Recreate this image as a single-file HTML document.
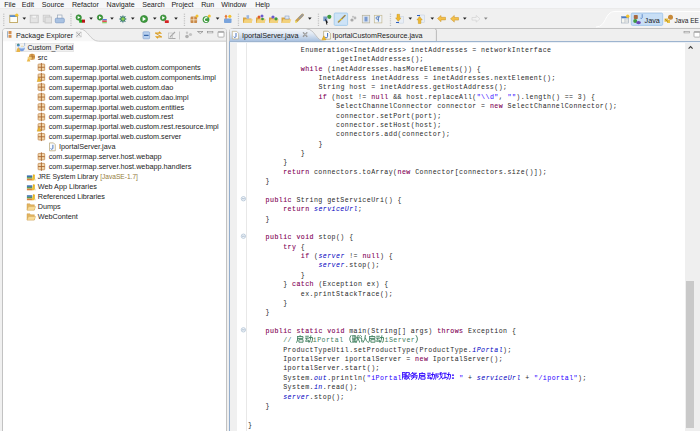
<!DOCTYPE html>
<html><head><meta charset="utf-8"><style>
*{margin:0;padding:0;box-sizing:border-box}
html,body{width:700px;height:431px;overflow:hidden;background:#f0f0f0;font-family:"Liberation Sans",sans-serif}
.a{position:absolute}
.mi{position:absolute;top:0.6px;font-size:7.1px;line-height:9px;color:#202020}
.cl{position:absolute;white-space:pre;font-family:"Liberation Mono",monospace;font-size:6.6px;letter-spacing:0.44px;line-height:9.365px;height:9.365px;color:#2a2a2a}
.k{color:#7f0055;-webkit-text-stroke:0.1px #7f0055}
.s{color:#2a00ff}
.f{color:#0000c0;font-style:italic}
.c{color:#3f7f5f}
.cjw{display:inline-block;width:8.2px;height:0;position:relative}svg.cj{position:absolute;left:0;top:-7.3px;width:8.2px;height:7.8px}
.tt{position:absolute;font-size:7.25px;line-height:10px;margin-top:0.65px;white-space:nowrap;color:#1c1c1c}
.dec{color:#957c3c}
svg.ov{position:absolute;left:0;top:0;width:700px;height:431px}
</style></head><body>
<div class="a" style="left:0;top:0;width:700px;height:9.2px;background:#f6f7f9;border-bottom:1px solid #ebebeb"><div class="mi" style="left:4.2px">File</div><div class="mi" style="left:21.8px">Edit</div><div class="mi" style="left:41.8px">Source</div><div class="mi" style="left:72.0px">Refactor</div><div class="mi" style="left:106.6px">Navigate</div><div class="mi" style="left:142.2px">Search</div><div class="mi" style="left:171.4px">Project</div><div class="mi" style="left:201.2px">Run</div><div class="mi" style="left:221.2px">Window</div><div class="mi" style="left:255.2px">Help</div></div>
<!-- left panel -->
<div class="a" style="left:2px;top:28px;width:225px;height:410px;background:#fff;border:1px solid #c2c2c2;border-radius:3.5px 3.5px 0 0"></div>
<svg class="ov" viewBox="0 0 700 431"><path d="M3 41 V31.5 Q3 29 5.5 29 H225 Q226 29 226 31 V41 Z" fill="#efefef"/><path d="M3 41.5 V31.5 Q3 29 5.5 29 H80 C88 29 90 41.2 98.6 41.2 H3 Z" fill="#f7f7f7"/><path d="M80 29 C88 29 90 41.2 98.6 41.2 H226" stroke="#c6c6c6" stroke-width="0.9" fill="none"/></svg>
<div class="a" style="left:15px;top:42.6px;width:58.5px;height:9.4px;background:#f1f1f1;border:0.8px solid #e6e6e6"></div>
<div class="tt" style="left:16px;top:30px">Package Explorer</div>
<div class="ti ic-proj" style="left:16.0px;top:43.30px"></div><div class="tt" style="left:27.5px;top:42.30px"><span style="font-size:6.95px">Custom_Portal</span></div><div class="ti ic-src" style="left:26.5px;top:53.23px"></div><div class="tt" style="left:37.7px;top:52.23px">src</div><div class="ti ic-pkg" style="left:37.5px;top:63.16px"></div><div class="tt" style="left:48.7px;top:62.16px">com.supermap.iportal.web.custom.components</div><div class="ti ic-pkg2" style="left:37.5px;top:73.09px"></div><div class="tt" style="left:48.7px;top:72.09px">com.supermap.iportal.web.custom.components.impl</div><div class="ti ic-pkg" style="left:37.5px;top:83.02px"></div><div class="tt" style="left:48.7px;top:82.02px">com.supermap.iportal.web.custom.dao</div><div class="ti ic-pkg" style="left:37.5px;top:92.95px"></div><div class="tt" style="left:48.7px;top:91.95px">com.supermap.iportal.web.custom.dao.impl</div><div class="ti ic-pkg" style="left:37.5px;top:102.88px"></div><div class="tt" style="left:48.7px;top:101.88px">com.supermap.iportal.web.custom.entities</div><div class="ti ic-pkg" style="left:37.5px;top:112.81px"></div><div class="tt" style="left:48.7px;top:111.81px">com.supermap.iportal.web.custom.rest</div><div class="ti ic-pkg2" style="left:37.5px;top:122.74px"></div><div class="tt" style="left:48.7px;top:121.74px">com.supermap.iportal.web.custom.rest.resource.impl</div><div class="ti ic-pkg" style="left:37.5px;top:132.67px"></div><div class="tt" style="left:48.7px;top:131.67px">com.supermap.iportal.web.custom.server</div><div class="ti ic-java" style="left:49.5px;top:142.60px"></div><div class="tt" style="left:59.0px;top:141.60px">IportalServer.java</div><div class="ti ic-pkg" style="left:37.5px;top:152.53px"></div><div class="tt" style="left:48.7px;top:151.53px">com.supermap.server.host.webapp</div><div class="ti ic-pkg" style="left:37.5px;top:162.46px"></div><div class="tt" style="left:48.7px;top:161.46px">com.supermap.server.host.webapp.handlers</div><div class="ti ic-lib" style="left:26.5px;top:172.39px"></div><div class="tt" style="left:37.7px;top:171.39px"><span style="font-size:6.85px">JRE System Library</span> <span class="dec" style="font-size:6.6px">[JavaSE-1.7]</span></div><div class="ti ic-lib" style="left:26.5px;top:182.32px"></div><div class="tt" style="left:37.7px;top:181.32px">Web App Libraries</div><div class="ti ic-lib" style="left:26.5px;top:192.25px"></div><div class="tt" style="left:37.7px;top:191.25px">Referenced Libraries</div><div class="ti ic-fold" style="left:26.5px;top:202.18px"></div><div class="tt" style="left:37.7px;top:201.18px">Dumps</div><div class="ti ic-fold" style="left:26.5px;top:212.11px"></div><div class="tt" style="left:37.7px;top:211.11px">WebContent</div>
<!-- editor -->
<div class="a" style="left:229px;top:28px;width:480px;height:410px;background:#fff;border:1px solid #c2c2c2;border-radius:3.5px 0 0 0"></div><div class="a" style="left:229px;top:41px;width:1.2px;height:400px;background:#94aecd"></div>
<svg class="ov" viewBox="0 0 700 431"><defs><linearGradient id="tg" x1="0" y1="0" x2="0" y2="1"><stop offset="0" stop-color="#f3f6fa"/><stop offset="0.35" stop-color="#e2eaf4"/><stop offset="1" stop-color="#a6bfdf"/></linearGradient></defs>
<path d="M230 41.5 V29 H700 V41.5 Z" fill="#efefef"/>
<path d="M436.4 41 V30.2 Q436.4 29 435 29" stroke="#b4b4b4" stroke-width="0.9" fill="none"/>
<path d="M230 41.6 V31.5 Q230 29 232.5 29 H306.7 C315 29 316 41.2 324.6 41.2 H230 Z" fill="url(#tg)"/>
<path d="M306.7 29 C315 29 316 41.2 324.6 41.2" stroke="#b8b8b8" stroke-width="0.8" fill="none"/>
<rect x="229" y="41" width="471" height="1.2" fill="#9db4cf"/>
</svg>
<div class="tt" style="left:242px;top:30px">IportalServer.java</div>
<div class="tt" style="left:332.5px;top:30px;font-size:7.15px">IportalCustomResource.java</div>
<div class="a" style="left:230px;top:42.5px;width:7px;height:400px;background:#f0f0f0"></div>
<div class="a" style="left:246.3px;top:42.5px;width:0.7px;height:400px;background:#e8e8e8"></div>
<div class="a" style="left:685px;top:42.5px;width:15px;height:400px;background:#efefef"></div>
<div class="a" style="left:685.5px;top:281px;width:8.5px;height:147px;background:#c9c9c9"></div>
<div class="cl" style="top:46.02px;left:300.80px"><span class="n">Enumeration&lt;InetAddress&gt; inetAddresses = networkInterface</span></div><div class="cl" style="top:55.38px;left:336.00px"><span class="n">.getInetAddresses();</span></div><div class="cl" style="top:64.75px;left:300.80px"><span class="k">while</span><span class="n"> (inetAddresses.hasMoreElements()) {</span></div><div class="cl" style="top:74.11px;left:318.40px"><span class="n">InetAddress inetAddress = inetAddresses.nextElement();</span></div><div class="cl" style="top:83.48px;left:318.40px"><span class="n">String host = inetAddress.getHostAddress();</span></div><div class="cl" style="top:92.84px;left:318.40px"><span class="k">if</span><span class="n"> (host != </span><span class="k">null</span><span class="n"> &amp;&amp; host.replaceAll(</span><span class="s">&quot;\\d&quot;</span><span class="n">, </span><span class="s">&quot;&quot;</span><span class="n">).length() == 3) {</span></div><div class="cl" style="top:102.21px;left:336.00px"><span class="n">SelectChannelConnector connector = </span><span class="k">new</span><span class="n"> SelectChannelConnector();</span></div><div class="cl" style="top:111.57px;left:336.00px"><span class="n">connector.setPort(port);</span></div><div class="cl" style="top:120.94px;left:336.00px"><span class="n">connector.setHost(host);</span></div><div class="cl" style="top:130.30px;left:336.00px"><span class="n">connectors.add(connector);</span></div><div class="cl" style="top:139.67px;left:318.40px"><span class="n">}</span></div><div class="cl" style="top:149.03px;left:300.80px"><span class="n">}</span></div><div class="cl" style="top:158.40px;left:283.20px"><span class="n">}</span></div><div class="cl" style="top:167.76px;left:283.20px"><span class="k">return</span><span class="n"> connectors.toArray(</span><span class="k">new</span><span class="n"> Connector[connectors.size()]);</span></div><div class="cl" style="top:177.13px;left:265.60px"><span class="n">}</span></div><div class="cl" style="top:186.49px;left:248.00px"></div><div class="cl" style="top:195.86px;left:265.60px"><span class="k">public</span><span class="n"> String getServiceUri() {</span></div><div class="cl" style="top:205.22px;left:283.20px"><span class="k">return</span><span class="n"> </span><span class="f">serviceUrl</span><span class="n">;</span></div><div class="cl" style="top:214.59px;left:265.60px"><span class="n">}</span></div><div class="cl" style="top:223.95px;left:248.00px"></div><div class="cl" style="top:233.32px;left:265.60px"><span class="k">public</span><span class="n"> </span><span class="k">void</span><span class="n"> stop() {</span></div><div class="cl" style="top:242.68px;left:283.20px"><span class="k">try</span><span class="n"> {</span></div><div class="cl" style="top:252.05px;left:300.80px"><span class="k">if</span><span class="n"> (</span><span class="f">server</span><span class="n"> != </span><span class="k">null</span><span class="n">) {</span></div><div class="cl" style="top:261.41px;left:318.40px"><span class="f">server</span><span class="n">.stop();</span></div><div class="cl" style="top:270.78px;left:300.80px"><span class="n">}</span></div><div class="cl" style="top:280.14px;left:283.20px"><span class="n">} </span><span class="k">catch</span><span class="n"> (Exception ex) {</span></div><div class="cl" style="top:289.51px;left:300.80px"><span class="n">ex.printStackTrace();</span></div><div class="cl" style="top:298.87px;left:283.20px"><span class="n">}</span></div><div class="cl" style="top:308.24px;left:265.60px"><span class="n">}</span></div><div class="cl" style="top:317.60px;left:248.00px"></div><div class="cl" style="top:326.97px;left:265.60px"><span class="k">public</span><span class="n"> </span><span class="k">static</span><span class="n"> </span><span class="k">void</span><span class="n"> main(String[] args) </span><span class="k">throws</span><span class="n"> Exception {</span></div><div class="cl" style="top:336.33px;left:283.20px"><span class="c">// <span class="cjw"><svg class="cj" viewBox="0 0 10 10" width="8.2" height="7.8" preserveAspectRatio="none"><path d="M5 0.6 L5.6 1.6 M2 2 H8.5 V4.4 H2 M2 2 V5 Q2 8 0.6 9.6 M4 6 H8.6 V9.2 H4 Z" stroke="#3f7f5f" stroke-width="1.15" fill="none" stroke-linecap="round"/></svg></span><span class="cjw"><svg class="cj" viewBox="0 0 10 10" width="8.2" height="7.8" preserveAspectRatio="none"><path d="M0.8 1.6 H4.2 M0.3 4 H4.8 M2.3 4 L0.8 8.2 L4.6 7.6 M3.6 6.2 L4.6 8.6 M5.4 3.2 H9.2 Q9.2 8.5 8.2 9.4 L7.2 8.8 M7.2 0.8 Q7.2 7 5 9.6" stroke="#3f7f5f" stroke-width="1.15" fill="none" stroke-linecap="round"/></svg></span>iPortal<span class="cjw"><svg class="cj" viewBox="0 0 10 10" width="8.2" height="7.8" preserveAspectRatio="none"><path d="M8.6 0.6 Q5.2 5 8.6 9.6" stroke="#3f7f5f" stroke-width="1.15" fill="none" stroke-linecap="round"/></svg></span><span class="cjw"><svg class="cj" viewBox="0 0 10 10" width="8.2" height="7.8" preserveAspectRatio="none"><path d="M0.6 1 H4.6 V5 H0.6 Z M2.6 1 V6.6 M0.4 6.4 H4.8 M0.5 9.4 L1.2 8 M2 9.4 L2.2 8 M3.4 9.4 L3.2 8 M4.6 9.4 L4 8 M5.2 3.6 H9.6 M7.4 0.6 Q7.4 6 5.2 9.6 M7.4 4.6 L9.6 9.6 M8.6 0.8 L9.4 1.8" stroke="#3f7f5f" stroke-width="1.15" fill="none" stroke-linecap="round"/></svg></span><span class="cjw"><svg class="cj" viewBox="0 0 10 10" width="8.2" height="7.8" preserveAspectRatio="none"><path d="M0.8 0.8 L2 2 M0.4 3.8 H2 V8.6 L3.4 7.4 M6.6 0.6 Q6.6 6 3.8 9.6 M6.6 4 Q7.6 8 9.8 9.6" stroke="#3f7f5f" stroke-width="1.15" fill="none" stroke-linecap="round"/></svg></span><span class="cjw"><svg class="cj" viewBox="0 0 10 10" width="8.2" height="7.8" preserveAspectRatio="none"><path d="M5 0.6 L5.6 1.6 M2 2 H8.5 V4.4 H2 M2 2 V5 Q2 8 0.6 9.6 M4 6 H8.6 V9.2 H4 Z" stroke="#3f7f5f" stroke-width="1.15" fill="none" stroke-linecap="round"/></svg></span><span class="cjw"><svg class="cj" viewBox="0 0 10 10" width="8.2" height="7.8" preserveAspectRatio="none"><path d="M0.8 1.6 H4.2 M0.3 4 H4.8 M2.3 4 L0.8 8.2 L4.6 7.6 M3.6 6.2 L4.6 8.6 M5.4 3.2 H9.2 Q9.2 8.5 8.2 9.4 L7.2 8.8 M7.2 0.8 Q7.2 7 5 9.6" stroke="#3f7f5f" stroke-width="1.15" fill="none" stroke-linecap="round"/></svg></span>iServer<span class="cjw"><svg class="cj" viewBox="0 0 10 10" width="8.2" height="7.8" preserveAspectRatio="none"><path d="M1.4 0.6 Q4.8 5 1.4 9.6" stroke="#3f7f5f" stroke-width="1.15" fill="none" stroke-linecap="round"/></svg></span></span></div><div class="cl" style="top:345.70px;left:283.20px"><span class="n">ProductTypeUtil.setProductType(ProductType.</span><span class="f">iPortal</span><span class="n">);</span></div><div class="cl" style="top:355.06px;left:283.20px"><span class="n">IportalServer iportalServer = </span><span class="k">new</span><span class="n"> IportalServer();</span></div><div class="cl" style="top:364.43px;left:283.20px"><span class="n">iportalServer.start();</span></div><div class="cl" style="top:373.79px;left:283.20px"><span class="n">System.</span><span class="f">out</span><span class="n">.println(</span><span class="s">&quot;iPortal<span class="cjw"><svg class="cj" viewBox="0 0 10 10" width="8.2" height="7.8" preserveAspectRatio="none"><path d="M0.8 0.8 H3.8 V9.2 L3 8.6 M0.8 0.8 V6 Q0.8 8.6 0.2 9.6 M0.8 3.6 H3.8 M0.8 6.2 H3.8 M5 0.8 H9 V3.6 L8.2 3.2 M5 0.8 V9.6 M5 5 H9 Q8 8 6 9.4 M6 5.4 Q7.6 8.6 9.6 9.4" stroke="#2a00ff" stroke-width="1.15" fill="none" stroke-linecap="round"/></svg></span><span class="cjw"><svg class="cj" viewBox="0 0 10 10" width="8.2" height="7.8" preserveAspectRatio="none"><path d="M3.2 0.6 Q2.2 2.6 0.6 3.6 M3 1.6 H8 Q5.6 4.6 0.8 5.2 M3.8 2.6 Q6 4.6 9.4 5.2 M1.6 6.4 H8.4 Q8.4 9.6 7.2 9.4 M5 5.2 Q5 8.4 1.8 9.6" stroke="#2a00ff" stroke-width="1.15" fill="none" stroke-linecap="round"/></svg></span><span class="cjw"><svg class="cj" viewBox="0 0 10 10" width="8.2" height="7.8" preserveAspectRatio="none"><path d="M5 0.6 L5.6 1.6 M2 2 H8.5 V4.4 H2 M2 2 V5 Q2 8 0.6 9.6 M4 6 H8.6 V9.2 H4 Z" stroke="#2a00ff" stroke-width="1.15" fill="none" stroke-linecap="round"/></svg></span><span class="cjw"><svg class="cj" viewBox="0 0 10 10" width="8.2" height="7.8" preserveAspectRatio="none"><path d="M0.8 1.6 H4.2 M0.3 4 H4.8 M2.3 4 L0.8 8.2 L4.6 7.6 M3.6 6.2 L4.6 8.6 M5.4 3.2 H9.2 Q9.2 8.5 8.2 9.4 L7.2 8.8 M7.2 0.8 Q7.2 7 5 9.6" stroke="#2a00ff" stroke-width="1.15" fill="none" stroke-linecap="round"/></svg></span><span class="cjw"><svg class="cj" viewBox="0 0 10 10" width="8.2" height="7.8" preserveAspectRatio="none"><path d="M1.2 2.6 H9.2 M1.2 2.6 V6 Q1.2 8.4 0.4 9.6 M1.2 5 H4 Q4 7.6 3.2 7.4 M6.4 0.6 Q6.6 6.6 9.6 9.4 M8.8 5 Q7.6 8 4.8 9.6 M8 0.8 L8.8 1.6" stroke="#2a00ff" stroke-width="1.15" fill="none" stroke-linecap="round"/></svg></span><span class="cjw"><svg class="cj" viewBox="0 0 10 10" width="8.2" height="7.8" preserveAspectRatio="none"><path d="M0.6 1.6 H4.2 M2.4 1.6 V7.6 M0.4 8 L4.6 6.8 M5 3.2 H9.2 Q9.2 8.6 8.2 9.4 L7.2 8.8 M7.2 0.8 Q7.2 7 4.8 9.6" stroke="#2a00ff" stroke-width="1.15" fill="none" stroke-linecap="round"/></svg></span><span class="cjw"><svg class="cj" viewBox="0 0 10 10" width="8.2" height="7.8" preserveAspectRatio="none"><path d="M2.2 3.6 h0.9 v0.9 h-0.9z M2.2 7.4 h0.9 v0.9 h-0.9z" stroke="#2a00ff" stroke-width="1.15" fill="none" stroke-linecap="round"/></svg></span>&quot;</span><span class="n"> + </span><span class="f">serviceUrl</span><span class="n"> + </span><span class="s">&quot;/iportal&quot;</span><span class="n">);</span></div><div class="cl" style="top:383.16px;left:283.20px"><span class="n">System.</span><span class="f">in</span><span class="n">.read();</span></div><div class="cl" style="top:392.52px;left:283.20px"><span class="f">server</span><span class="n">.stop();</span></div><div class="cl" style="top:401.89px;left:265.60px"><span class="n">}</span></div><div class="cl" style="top:411.25px;left:248.00px"></div><div class="cl" style="top:420.62px;left:248.00px"><span class="n">}</span></div>
<svg class="ov" viewBox="0 0 700 431"><rect x="3.0999999999999996" y="13.7" width="1.3" height="1" fill="#bdbdbd"/><rect x="3.0999999999999996" y="15.9" width="1.3" height="1" fill="#bdbdbd"/><rect x="3.0999999999999996" y="18.2" width="1.3" height="1" fill="#bdbdbd"/><rect x="3.0999999999999996" y="20.4" width="1.3" height="1" fill="#bdbdbd"/><rect x="3.0999999999999996" y="22.7" width="1.3" height="1" fill="#bdbdbd"/><rect x="3.0999999999999996" y="24.9" width="1.3" height="1" fill="#bdbdbd"/><rect x="9.8" y="15.2" width="7.6" height="7.4" fill="#fdfdf6" stroke="#b89a4a" stroke-width="0.8"/><rect x="9.8" y="15.2" width="7.6" height="1.8" fill="#5a8fd0"/><circle cx="16.8" cy="15.2" r="1.6" fill="#f2c230"/><path d="M22.5 17.6 h3.6 l-1.8 2.2 z" fill="#222"/><rect x="30.2" y="15.2" width="8" height="7.6" fill="#e4e4e4" stroke="#c2c2c2" stroke-width="0.8"/><rect x="32" y="15.4" width="4.4" height="2.6" fill="#f4f4f4" stroke="#c8c8c8" stroke-width="0.5"/><rect x="43.2" y="15.2" width="6.6" height="6.6" fill="#e6e6e6" stroke="#c8c8c8" stroke-width="0.8"/><rect x="45" y="17" width="6.6" height="6" fill="#e2e2e2" stroke="#c4c4c4" stroke-width="0.8"/><rect x="57.5" y="15" width="4.5" height="4" fill="#f6f6f6" stroke="#8a9bb0" stroke-width="0.6"/><rect x="55.3" y="18.2" width="9" height="4.6" rx="1" fill="#a9c2e2" stroke="#6d8fbf" stroke-width="0.6"/><rect x="70.3" y="13.7" width="1.3" height="1" fill="#bdbdbd"/><rect x="70.3" y="15.9" width="1.3" height="1" fill="#bdbdbd"/><rect x="70.3" y="18.2" width="1.3" height="1" fill="#bdbdbd"/><rect x="70.3" y="20.4" width="1.3" height="1" fill="#bdbdbd"/><rect x="70.3" y="22.7" width="1.3" height="1" fill="#bdbdbd"/><rect x="70.3" y="24.9" width="1.3" height="1" fill="#bdbdbd"/><circle cx="78.7" cy="17.5" r="2.7" fill="#3e9b3e" stroke="#2a7a2a" stroke-width="0.6"/><path d="M77.67 15.88 l2.56 1.62 l-2.56 1.62 z" fill="#fff"/><rect x="79.2" y="19.6" width="3" height="3.1" fill="#1fa31f"/><rect x="82" y="19.6" width="3" height="3.1" fill="#b81414"/><path d="M89.3 17.6 h3.6 l-1.8 2.2 z" fill="#222"/><circle cx="100" cy="17.5" r="2.7" fill="#3e9b3e" stroke="#2a7a2a" stroke-width="0.6"/><path d="M98.97 15.88 l2.56 1.62 l-2.56 1.62 z" fill="#fff"/><rect x="102.2" y="19" width="4.6" height="1.4" fill="#5c78d8"/><rect x="102.2" y="20.5" width="4.6" height="1.4" fill="#e04040"/><rect x="102.2" y="22" width="4.6" height="1.3" fill="#8fd070"/><path d="M110.2 17.6 h3.6 l-1.8 2.2 z" fill="#222"/><path d="M123 14.8 l0.6 2 l2.2 -0.9 l-1 2.1 l2.1 1 l-2.1 0.9 l1 2.2 l-2.2 -0.9 l-0.6 2.2 l-0.8 -2.2 l-2.2 0.9 l0.9 -2.2 l-2.1 -0.9 l2.1 -1 l-1 -2.1 l2.3 0.9 z" fill="#2f6f6f"/><circle cx="123" cy="19" r="1.8" fill="#8ccf50"/><path d="M131 17.6 h3.6 l-1.8 2.2 z" fill="#222"/><circle cx="144" cy="19" r="3.6" fill="#3e9b3e" stroke="#2a7a2a" stroke-width="0.6"/><path d="M142.63 16.84 l3.42 2.16 l-3.42 2.16 z" fill="#fff"/><path d="M153 17.6 h3.6 l-1.8 2.2 z" fill="#222"/><circle cx="163.3" cy="17.8" r="2.9" fill="#3e9b3e" stroke="#2a7a2a" stroke-width="0.6"/><path d="M162.20 16.06 l2.75 1.74 l-2.75 1.74 z" fill="#fff"/><rect x="164.8" y="20.2" width="4" height="2.8" rx="0.6" fill="#d42424"/><path d="M174.2 17.6 h3.6 l-1.8 2.2 z" fill="#222"/><rect x="183.8" y="13.7" width="1.3" height="1" fill="#bdbdbd"/><rect x="183.8" y="15.9" width="1.3" height="1" fill="#bdbdbd"/><rect x="183.8" y="18.2" width="1.3" height="1" fill="#bdbdbd"/><rect x="183.8" y="20.4" width="1.3" height="1" fill="#bdbdbd"/><rect x="183.8" y="22.7" width="1.3" height="1" fill="#bdbdbd"/><rect x="183.8" y="24.9" width="1.3" height="1" fill="#bdbdbd"/><rect x="190.5" y="16.5" width="6.6" height="6.6" rx="1.2" fill="#c98a4a"/><path d="M193.8 16.5v6.6M190.5 19.8h6.6" stroke="#fff3d8" stroke-width="0.7"/><circle cx="197" cy="16" r="1.5" fill="#f2c230"/><circle cx="206" cy="19.6" r="3.4" fill="#3e9b3e"/><path d="M207.4 18.1 a1.9 1.9 0 1 0 0 3" stroke="#fff" stroke-width="1.1" fill="none"/><circle cx="209.3" cy="16" r="1.5" fill="#f2c230"/><path d="M215.8 17.6 h3.6 l-1.8 2.2 z" fill="#222"/><rect x="224" y="18.5" width="7.5" height="4.5" rx="0.8" fill="#7aa4dc"/><path d="M226 14.5 l1.6 2.2 h-1 v2 h-1.2 v-2 h-1 z" fill="#e86a20"/><circle cx="229.8" cy="16.3" r="1.6" fill="#f2c230"/><rect x="237.8" y="13.7" width="1.3" height="1" fill="#bdbdbd"/><rect x="237.8" y="15.9" width="1.3" height="1" fill="#bdbdbd"/><rect x="237.8" y="18.2" width="1.3" height="1" fill="#bdbdbd"/><rect x="237.8" y="20.4" width="1.3" height="1" fill="#bdbdbd"/><rect x="237.8" y="22.7" width="1.3" height="1" fill="#bdbdbd"/><rect x="237.8" y="24.9" width="1.3" height="1" fill="#bdbdbd"/><path d="M243 17.5 h3 l1 1 h4.5 v4.5 h-8.5 z" fill="#d9a441"/><path d="M243.3 23.0 l1.3 -3.8 h8.2 l-1.3 3.8 z" fill="#f3d27d"/><rect x="246.5" y="15.2" width="2.6" height="3.5" fill="#9ab6e0"/><path d="M256 17.5 h3 l1 1 h4.5 v4.5 h-8.5 z" fill="#d9a441"/><path d="M256.3 23.0 l1.3 -3.8 h8.2 l-1.3 3.8 z" fill="#f3d27d"/><circle cx="259" cy="17" r="1.5" fill="#e05a2a"/><circle cx="262" cy="16" r="1.5" fill="#6a5acd"/><circle cx="262.5" cy="19" r="1.3" fill="#3e9b3e"/><path d="M269 17.5 h3 l1 1 h4.5 v4.5 h-8.5 z" fill="#d9a441"/><path d="M269.3 23.0 l1.3 -3.8 h8.2 l-1.3 3.8 z" fill="#f3d27d"/><circle cx="273" cy="17" r="1.6" fill="#6a5acd"/><circle cx="276" cy="18.8" r="1.6" fill="#3e9b3e"/><path d="M281.5 17.5 h3 l1 1 h4.5 v4.5 h-8.5 z" fill="#d9a441"/><path d="M281.8 23.0 l1.3 -3.8 h8.2 l-1.3 3.8 z" fill="#f3d27d"/><rect x="285" y="16" width="4" height="3" fill="#e0e8f4" stroke="#7a94bb" stroke-width="0.5"/><path d="M302.5 15 l-6 6" stroke="#c8a050" stroke-width="2.6" stroke-linecap="round"/><path d="M302.5 15 l-3 3" stroke="#9a9a9a" stroke-width="2.2" stroke-linecap="round"/><circle cx="296" cy="22" r="1" fill="#f0e060"/><path d="M308 17.6 h3.6 l-1.8 2.2 z" fill="#222"/><rect x="317.8" y="13.7" width="1.3" height="1" fill="#bdbdbd"/><rect x="317.8" y="15.9" width="1.3" height="1" fill="#bdbdbd"/><rect x="317.8" y="18.2" width="1.3" height="1" fill="#bdbdbd"/><rect x="317.8" y="20.4" width="1.3" height="1" fill="#bdbdbd"/><rect x="317.8" y="22.7" width="1.3" height="1" fill="#bdbdbd"/><rect x="317.8" y="24.9" width="1.3" height="1" fill="#bdbdbd"/><rect x="323.3" y="16.5" width="4" height="4.6" fill="#7a9cc8"/><circle cx="329.3" cy="16.8" r="2.1" fill="#3e9b3e"/><path d="M325 18.5 l3.2 4 l-1.5 0.2 l0.8 1.6 l-1 0.4 z" fill="#111"/><rect x="334.2" y="13" width="13.4" height="12.4" rx="1" fill="#cde3f7" stroke="#9cc6ea" stroke-width="0.8"/><path d="M345 15.5 l-6.5 6.5" stroke="#a08850" stroke-width="1.6" stroke-linecap="round"/><path d="M337.5 21.5 l4 -3 l1 1 z" fill="#f0d030"/><circle cx="352" cy="20" r="1.6" fill="#a8a8a8"/><circle cx="355" cy="18" r="1.4" fill="#b8b8b8"/><circle cx="353" cy="16.8" r="1" fill="#c0c0c0"/><rect x="362.3" y="15.3" width="7.4" height="7.6" fill="#dde4ee" stroke="#b8b29a" stroke-width="0.7"/><rect x="364.5" y="16.8" width="3" height="4.6" fill="#7a9ad0"/><rect x="374.3" y="15.3" width="7.6" height="7.6" fill="#eef3f9" stroke="#c4b890" stroke-width="0.7"/><path d="M377 16.8 h3 M378.4 16.8 v4.8 M377 16.8 a1.3 1.3 0 0 0 0 2.5 h1.4" stroke="#3d68b0" stroke-width="0.8" fill="none"/><rect x="389.8" y="13.7" width="1.3" height="1" fill="#bdbdbd"/><rect x="389.8" y="15.9" width="1.3" height="1" fill="#bdbdbd"/><rect x="389.8" y="18.2" width="1.3" height="1" fill="#bdbdbd"/><rect x="389.8" y="20.4" width="1.3" height="1" fill="#bdbdbd"/><rect x="389.8" y="22.7" width="1.3" height="1" fill="#bdbdbd"/><rect x="389.8" y="24.9" width="1.3" height="1" fill="#bdbdbd"/><rect x="398" y="16.5" width="5.5" height="6.6" fill="#e8eef6" stroke="#c0ccdc" stroke-width="0.5"/><path d="M397 14.3 h2.6 v3.6 h1.4 l-2.7 3.4 l-2.7 -3.4 h1.4 z" fill="#f0b830" stroke="#c08a10" stroke-width="0.4"/><rect x="396" y="22" width="3" height="1" fill="#3060c0"/><path d="M408.5 17.6 h3.6 l-1.8 2.2 z" fill="#222"/><rect x="419" y="15" width="5.5" height="7.4" fill="#e8eef6" stroke="#c0ccdc" stroke-width="0.5"/><path d="M418.3 23.5 h2.6 v-3.6 h1.4 l-2.7 -3.4 l-2.7 3.4 h1.4 z" fill="#f0b830" stroke="#c08a10" stroke-width="0.4"/><rect x="417" y="15" width="3" height="1" fill="#3060c0"/><path d="M430.5 17.6 h3.6 l-1.8 2.2 z" fill="#222"/><path d="M437.5 18.5 l3.5 -3 v1.8 h4.5 v2.6 h-4.5 v1.8 z" fill="#f4c04a" stroke="#c89020" stroke-width="0.5"/><path d="M450.5 18.8 l3.8 -3.3 v2 h4.2 v2.6 h-4.2 v2 z" fill="#f4c04a" stroke="#c89020" stroke-width="0.5"/><path d="M463 17.6 h3.6 l-1.8 2.2 z" fill="#222"/><path d="M480 18.8 l-3.8 -3.3 v2 h-4.2 v2.6 h4.2 v2 z" fill="#f2f2f2" stroke="#cfcfcf" stroke-width="0.6"/><path d="M484 17.6 h3.6 l-1.8 2.2 z" fill="#8a8a8a"/><path d="M18.6 47.5 h6.4 q-0.4 3.6 -3.2 3.8 q-2.8 -0.2 -3.2 -3.8 z" fill="#7aa0e0"/><ellipse cx="21.8" cy="47.599999999999994" rx="3.2" ry="0.9" fill="#d8e8fa"/><path d="M21.2 46.9 l0.8 -1.8 l0.8 1.8 z" fill="#f0d890"/><circle cx="18.3" cy="44.9" r="1.5" fill="#4a8ad0"/><path d="M17.3 44.5 q1 -0.6 1.8 0.6" stroke="#5aa040" stroke-width="0.7" fill="none"/><path d="M16.3 51.9 q0.2 -3 2 -4.6 q1.8 1.6 2 4.6 z" fill="#e8b448"/><path d="M24.6 42.9 v2.6 l-1 1.2" stroke="#8aa8cc" stroke-width="0.7" fill="none"/><rect x="29.0" y="53.83" width="6" height="6" rx="2.2" fill="#d9a050"/><path d="M32.0 54.029999999999994v5.6M29.2 56.83h5.6" stroke="#9a5e2a" stroke-width="0.6"/><path d="M26.8 61.42999999999999 l1.8 -4.8 l1.8 4.8 z" fill="#ebb84a"/><rect x="27.7" y="56.73" width="4" height="2.2" fill="#f3cf78"/><rect x="38.1" y="64.06" width="6.6" height="6.4" rx="0.6" fill="#f2d8ae" stroke="#c48a52" stroke-width="0.8"/><path d="M41.4 62.959999999999994v8.6M38.1 67.25999999999999h6.6" stroke="#a8652e" stroke-width="0.9"/><rect x="38.1" y="73.99000000000001" width="6.6" height="6.4" rx="0.6" fill="#f2d8ae" stroke="#c48a52" stroke-width="0.8"/><path d="M41.4 72.89v8.6M38.1 77.19h6.6" stroke="#a8652e" stroke-width="0.9"/><path d="M37.1 81.49000000000001 l2 -4.2 l2 4.2 z" fill="#efb830" stroke="#c08a10" stroke-width="0.4"/><rect x="38.1" y="83.92" width="6.6" height="6.4" rx="0.6" fill="#f2d8ae" stroke="#c48a52" stroke-width="0.8"/><path d="M41.4 82.82v8.6M38.1 87.11999999999999h6.6" stroke="#a8652e" stroke-width="0.9"/><rect x="38.1" y="93.85" width="6.6" height="6.4" rx="0.6" fill="#f2d8ae" stroke="#c48a52" stroke-width="0.8"/><path d="M41.4 92.74999999999999v8.6M38.1 97.04999999999998h6.6" stroke="#a8652e" stroke-width="0.9"/><rect x="38.1" y="103.78" width="6.6" height="6.4" rx="0.6" fill="#f2d8ae" stroke="#c48a52" stroke-width="0.8"/><path d="M41.4 102.67999999999999v8.6M38.1 106.97999999999999h6.6" stroke="#a8652e" stroke-width="0.9"/><rect x="38.1" y="113.71" width="6.6" height="6.4" rx="0.6" fill="#f2d8ae" stroke="#c48a52" stroke-width="0.8"/><path d="M41.4 112.60999999999999v8.6M38.1 116.90999999999998h6.6" stroke="#a8652e" stroke-width="0.9"/><rect x="38.1" y="123.64" width="6.6" height="6.4" rx="0.6" fill="#f2d8ae" stroke="#c48a52" stroke-width="0.8"/><path d="M41.4 122.53999999999999v8.6M38.1 126.83999999999999h6.6" stroke="#a8652e" stroke-width="0.9"/><path d="M37.1 131.14 l2 -4.2 l2 4.2 z" fill="#efb830" stroke="#c08a10" stroke-width="0.4"/><rect x="38.1" y="133.57000000000002" width="6.6" height="6.4" rx="0.6" fill="#f2d8ae" stroke="#c48a52" stroke-width="0.8"/><path d="M41.4 132.47000000000003v8.6M38.1 136.77h6.6" stroke="#a8652e" stroke-width="0.9"/><path d="M49.5 142.9 h4 l1.8 1.8 v6.1 h-5.8 z" fill="#fafcff" stroke="#b4a070" stroke-width="0.7"/><path d="M52.9 144.79999999999998 v3.4 a1.2 1.2 0 0 1 -2.3 0.3" stroke="#3a6ab8" stroke-width="0.9" fill="none"/><rect x="38.1" y="153.42999999999998" width="6.6" height="6.4" rx="0.6" fill="#f2d8ae" stroke="#c48a52" stroke-width="0.8"/><path d="M41.4 152.32999999999998v8.6M38.1 156.62999999999997h6.6" stroke="#a8652e" stroke-width="0.9"/><rect x="38.1" y="163.35999999999999" width="6.6" height="6.4" rx="0.6" fill="#f2d8ae" stroke="#c48a52" stroke-width="0.8"/><path d="M41.4 162.26v8.6M38.1 166.55999999999997h6.6" stroke="#a8652e" stroke-width="0.9"/><rect x="26.9" y="175.39" width="5.4" height="1.6" fill="#3f6fae"/><rect x="26.9" y="177.08999999999997" width="5.4" height="1.5" fill="#4f9a5a"/><rect x="26.9" y="178.69" width="5.4" height="1.7" fill="#d9803a"/><path d="M31.7 180.39 l1.6 -6 l1.8 0.4 l-1 5.6 z" fill="#f0c030"/><path d="M33.3 174.39 l1.8 6" stroke="#d0a020" stroke-width="0.6"/><rect x="26.9" y="185.32" width="5.4" height="1.6" fill="#3f6fae"/><rect x="26.9" y="187.01999999999998" width="5.4" height="1.5" fill="#4f9a5a"/><rect x="26.9" y="188.62" width="5.4" height="1.7" fill="#d9803a"/><path d="M31.7 190.32 l1.6 -6 l1.8 0.4 l-1 5.6 z" fill="#f0c030"/><path d="M33.3 184.32 l1.8 6" stroke="#d0a020" stroke-width="0.6"/><rect x="26.9" y="195.25" width="5.4" height="1.6" fill="#3f6fae"/><rect x="26.9" y="196.95" width="5.4" height="1.5" fill="#4f9a5a"/><rect x="26.9" y="198.55" width="5.4" height="1.7" fill="#d9803a"/><path d="M31.7 200.25 l1.6 -6 l1.8 0.4 l-1 5.6 z" fill="#f0c030"/><path d="M33.3 194.25 l1.8 6" stroke="#d0a020" stroke-width="0.6"/><path d="M27.0 203.78 h2.8 l1 1 h3.6 v5.2 h-7.4 z" fill="#e2b460" stroke="#c89a48" stroke-width="0.4"/><path d="M27.0 210.18 l1.5 -3.6 h7.2 l-1.5 3.6 z" fill="#f8dc98" stroke="#d0a050" stroke-width="0.4"/><path d="M27.0 213.71 h2.8 l1 1 h3.6 v5.2 h-7.4 z" fill="#e2b460" stroke="#c89a48" stroke-width="0.4"/><path d="M27.0 220.11 l1.5 -3.6 h7.2 l-1.5 3.6 z" fill="#f8dc98" stroke="#d0a050" stroke-width="0.4"/><path d="M596 27.5 C607 27.5 604 11.4 615 11.4 H700 V27.5 Z" fill="#f4f4f4"/><path d="M596 27 C607 27 604 11.4 615 11.4 H700" stroke="#ffffff" stroke-width="1" fill="none"/><rect x="621.5" y="16.5" width="7" height="6.5" fill="#f6f6f0" stroke="#9aa8b8" stroke-width="0.6"/><rect x="621.5" y="16.5" width="7" height="1.8" fill="#4a7ac8"/><path d="M624.8 19.8h3.7M624.8 21.2h3.7M624.8 18.5v4.5" stroke="#b0b8c4" stroke-width="0.5"/><circle cx="627.7" cy="16.2" r="1.7" fill="#f2c230"/><rect x="631.3" y="13.1" width="31.4" height="12.3" rx="1.2" fill="#c8dff6" stroke="#9cc3ea" stroke-width="0.8"/><rect x="633.8" y="15" width="4" height="4" rx="0.8" fill="#a86a40"/><circle cx="635.2" cy="21" r="2" fill="#3e9b3e"/><ellipse cx="638.5" cy="22.6" rx="2.4" ry="1.6" fill="#6a4ab8"/><path d="M642.2 14.2 v3.6 a1 1 0 0 1 -1.8 0.2" stroke="#3a6ab8" stroke-width="0.7" fill="none"/><circle cx="670.5" cy="17.2" r="2.5" fill="#c88a3a"/><path d="M664.5 18.5 h3.5 v3.2 h-3.5 z M667 20 h3 v3 h-3z" fill="#e8c040"/><path d="M665 19.2 l3 2.5" stroke="#7a5a20" stroke-width="0.5"/><path d="M7.5 31.2 v6.5" stroke="#a0b4c8" stroke-width="1"/><rect x="8.5" y="31" width="3" height="3" fill="#d49050"/><rect x="8.5" y="34.8" width="3" height="3" fill="#d49050"/><path d="M76.5 32.2 l4.5 4.5 M81 32.2 l-4.5 4.5" stroke="#8a8a8a" stroke-width="0.8"/><rect x="76.2" y="32" width="5" height="5" fill="none" stroke="#c8c8c8" stroke-width="0.5"/><rect x="143" y="31.8" width="6.6" height="7" rx="0.8" fill="#b8d0ee" stroke="#7a9ccc" stroke-width="0.6"/><rect x="144" y="34.8" width="4.6" height="1.1" fill="#2a5aa0"/><path d="M155 33.2 h5.5 l-1.5 -1.5 M162 36.8 h-5.5 l1.5 1.5" stroke="#e0a020" stroke-width="1.3" fill="none"/><path d="M156 33.5 l5 3" stroke="#c88a10" stroke-width="0.8"/><path d="M168.5 38.5 h7 M170 37 l5 -5" stroke="#a8a8a8" stroke-width="1.1"/><rect x="168.5" y="33" width="4" height="5" fill="none" stroke="#b8b8b8" stroke-width="0.6"/><path d="M179.5 31.5 v8" stroke="#c0c0c0" stroke-width="0.8"/><circle cx="187" cy="36.5" r="1.8" fill="#b0b0b0"/><circle cx="190.5" cy="34.5" r="1.6" fill="#c4c4c4"/><circle cx="187" cy="32.8" r="1.2" fill="#c8c8c8"/><path d="M197.5 31.5 h5.5 l-2.75 2 z" fill="none" stroke="#777" stroke-width="0.6"/><rect x="207.3" y="31.3" width="5.6" height="1.6" fill="#fff" stroke="#8a8a8a" stroke-width="0.6"/><rect x="218" y="31.5" width="6" height="5.6" rx="0.8" fill="#fff" stroke="#9a9a9a" stroke-width="0.7"/><rect x="218" y="31.5" width="6" height="1.3" fill="#a8a8a8"/><path d="M232.3 31.3 h4.3 l2 2 v5.6 h-6.3 z" fill="#fafcff" stroke="#b0a070" stroke-width="0.6"/><path d="M236 33 v3.4 a1.2 1.2 0 0 1 -2.3 0.3" stroke="#3a6ab8" stroke-width="0.9" fill="none"/><path d="M303 32.4 l4.3 4.3 M307.3 32.4 l-4.3 4.3" stroke="#7a7a7a" stroke-width="1.3"/><path d="M303 32.4 l4.3 4.3 M307.3 32.4 l-4.3 4.3" stroke="#f4f4f4" stroke-width="0.5"/><path d="M323.6 31.2 h4.6 l2.2 2.2 v5.8 h-6.8 z" fill="#fafcff" stroke="#b0a070" stroke-width="0.7"/><path d="M327.6 33 v3.6 a1.3 1.3 0 0 1 -2.5 0.3" stroke="#3a6ab8" stroke-width="1" fill="none"/><path d="M321.8 39.8 l2.1 -4 l2.1 4 z" fill="#f0b820" stroke="#c08a10" stroke-width="0.4"/><rect x="684" y="31.3" width="5.6" height="1.6" fill="#fff" stroke="#8a8a8a" stroke-width="0.6"/><rect x="694" y="31.5" width="6" height="5.6" rx="0.8" fill="#fff" stroke="#9a9a9a" stroke-width="0.7"/><rect x="694" y="31.5" width="6" height="1.3" fill="#a8a8a8"/><circle cx="243.4" cy="198.74" r="2.2" fill="#f4f8fc" stroke="#9cb2c8" stroke-width="0.6"/><path d="M242 198.74 h2.8" stroke="#7a94b0" stroke-width="0.6"/><circle cx="243.4" cy="236.20" r="2.2" fill="#f4f8fc" stroke="#9cb2c8" stroke-width="0.6"/><path d="M242 236.20 h2.8" stroke="#7a94b0" stroke-width="0.6"/><circle cx="243.4" cy="329.85" r="2.2" fill="#f4f8fc" stroke="#9cb2c8" stroke-width="0.6"/><path d="M242 329.85 h2.8" stroke="#7a94b0" stroke-width="0.6"/><path d="M688.6 48.6 l2 -2 l2 2" stroke="#3a3a3a" stroke-width="1.1" fill="none"/></svg>
<div class="tt" style="left:644.5px;top:15px">Java</div>
<div class="tt" style="left:674.6px;top:15px;font-size:6.55px">Java EE</div>
</body></html>
